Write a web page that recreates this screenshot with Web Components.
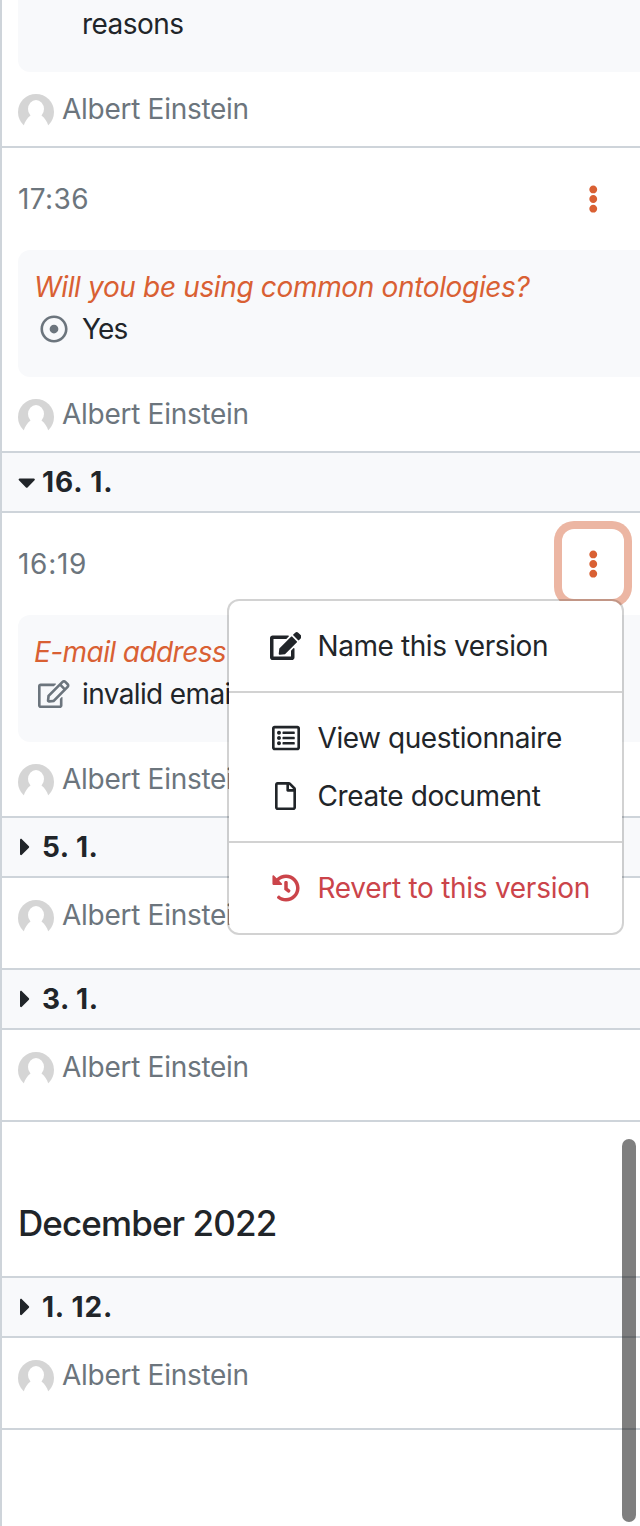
<!DOCTYPE html>
<html lang="en">
<head>
<meta charset="utf-8">
<title>Version history</title>
<style>
  html, body { margin: 0; height: 1526px; overflow: hidden; background: #fff; }
  body {
    --accent: #d96033; --ring: #ecb6a3; --line: #ced4da; --soft: #f8f9fb;
    --muted: #6c757d; --ink: #212529; --danger: #cb444a;
    font: 430 28px/42px Inter, "Liberation Sans", sans-serif; color: var(--ink);
  }
</style>
</head>
<body>
<history-panel>
  <history-event continued>
    <event-answer spacing="-.55">reasons</event-answer>
    <event-author>Albert Einstein</event-author>
  </history-event>
  <history-event time="17:36" spacing=".4">
    <event-answer question="Will you be using common ontologies?" icon="dot-circle" spacing="-.8">Yes</event-answer>
    <event-author>Albert Einstein</event-author>
  </history-event>
  <day-header open spacing=".95">16. 1.</day-header>
  <history-event time="16:19" spacing=".7" active>
    <event-answer question="E-mail address" question-spacing="-.58" icon="edit" spacing="-.62">invalid email</event-answer>
    <event-author>Albert Einstein</event-author>
    <action-menu slot="menu">
      <menu-item icon="edit-solid" spacing="-.42">Name this version</menu-item>
      <menu-divider></menu-divider>
      <menu-item icon="list" spacing="-.44">View questionnaire</menu-item>
      <menu-item icon="file" spacing="-.4">Create document</menu-item>
      <menu-divider></menu-divider>
      <menu-item icon="history" spacing="-.28" danger>Revert to this version</menu-item>
    </action-menu>
  </history-event>
  <day-header spacing=".5">5. 1.</day-header>
  <event-author summary>Albert Einstein</event-author>
  <day-header spacing=".5">3. 1.</day-header>
  <event-author summary>Albert Einstein</event-author>
  <month-title>December 2022</month-title>
  <day-header spacing=".8">1. 12.</day-header>
  <event-author summary last>Albert Einstein</event-author>
</history-panel>
<script>
const ICONS = {
  'edit-solid': [576, 'M402.6 83.2l90.2 90.2c3.8 3.8 3.8 10 0 13.8L274.4 405.6l-92.8 10.3c-12.4 1.4-22.9-9.1-21.5-21.5l10.3-92.8L388.8 83.2c3.8-3.8 10-3.8 13.8 0zm162-22.9l-48.8-48.8c-15.2-15.2-39.9-15.2-55.2 0l-35.4 35.4c-3.8 3.8-3.8 10 0 13.8l90.2 90.2c3.8 3.8 10 3.8 13.8 0l35.4-35.4c15.2-15.3 15.2-40 0-55.2zM384 346.2V448H64V128h229.8c3.2 0 6.2-1.3 8.5-3.5l40-40c7.6-7.6 2.2-20.5-8.5-20.5H48C21.5 64 0 85.5 0 112v352c0 26.5 21.5 48 48 48h352c26.5 0 48-21.5 48-48V306.2c0-10.7-12.9-16-20.5-8.5l-40 40c-2.2 2.3-3.5 5.3-3.5 8.5z'],
  'edit': [576, 'M402.3 344.9l32-32c5-5 13.7-1.5 13.7 5.7V464c0 26.5-21.5 48-48 48H48c-26.5 0-48-21.5-48-48V112c0-26.5 21.5-48 48-48h273.5c7.1 0 10.7 8.6 5.7 13.7l-32 32c-1.5 1.5-3.5 2.3-5.7 2.3H48v352h352V350.5c0-2.1.8-4.1 2.3-5.6zm156.6-201.8L296.3 405.7l-90.4 10c-26.2 2.9-48.5-19.2-45.6-45.6l10-90.4L432.9 17.1c22.9-22.9 59.9-22.9 82.7 0l43.2 43.2c22.9 22.9 22.9 60 .1 82.8zM460.1 174L402 115.9 216.2 301.8l-7.3 65.3 65.3-7.3L460.1 174zm64.8-79.7l-43.2-43.2c-4.1-4.1-10.8-4.1-14.8 0L436 82l58.1 58.1 30.9-30.9c4-4.2 4-10.8-.1-14.9z'],
  'list': [512, 'M464 32H48C21.49 32 0 53.49 0 80v352c0 26.51 21.49 48 48 48h416c26.51 0 48-21.49 48-48V80c0-26.51-21.49-48-48-48zm-6 400H54a6 6 0 0 1-6-6V86a6 6 0 0 1 6-6h404a6 6 0 0 1 6 6v340a6 6 0 0 1-6 6zm-42-92v24c0 6.627-5.373 12-12 12H204c-6.627 0-12-5.373-12-12v-24c0-6.627 5.373-12 12-12h200c6.627 0 12 5.373 12 12zm0-96v24c0 6.627-5.373 12-12 12H204c-6.627 0-12-5.373-12-12v-24c0-6.627 5.373-12 12-12h200c6.627 0 12 5.373 12 12zm0-96v24c0 6.627-5.373 12-12 12H204c-6.627 0-12-5.373-12-12v-24c0-6.627 5.373-12 12-12h200c6.627 0 12 5.373 12 12zm-252 12c0 19.882-16.118 36-36 36s-36-16.118-36-36 16.118-36 36-36 36 16.118 36 36zm0 96c0 19.882-16.118 36-36 36s-36-16.118-36-36 16.118-36 36-36 36 16.118 36 36zm0 96c0 19.882-16.118 36-36 36s-36-16.118-36-36 16.118-36 36-36 36 16.118 36 36z'],
  'file': [384, 'M369.9 97.9L286 14C277 5 264.8-.1 252.1-.1H48C21.5 0 0 21.5 0 48v416c0 26.5 21.5 48 48 48h288c26.5 0 48-21.5 48-48V131.9c0-12.7-5.1-25-14.1-34zM332.1 128H256V51.9l76.1 76.1zM48 464V48h160v104c0 13.3 10.7 24 24 24h104v288H48z'],
  'history': [512, 'M504 255.531c.253 136.64-111.18 248.372-247.82 248.468-59.015.042-113.223-20.53-155.822-54.911-11.077-8.94-11.905-25.541-1.839-35.607l11.267-11.267c8.609-8.609 22.353-9.551 31.891-1.984C173.062 425.135 212.781 440 256 440c101.705 0 184-82.311 184-184 0-101.705-82.311-184-184-184-48.814 0-93.149 18.969-126.068 49.932l50.754 50.754c10.08 10.08 2.941 27.314-11.313 27.314H24c-8.837 0-16-7.163-16-16V38.627c0-14.254 17.234-21.393 27.314-11.314l49.372 49.372C129.209 34.136 189.552 8 256 8c136.81 0 247.747 110.78 248 247.531zm-180.912 78.784l9.823-12.63c8.138-10.463 6.253-25.542-4.21-33.679L288 256.349V152c0-13.255-10.745-24-24-24h-16c-13.255 0-24 10.745-24 24v135.651l65.409 50.874c10.463 8.137 25.541 6.253 33.679-4.21z'],
  'dot-circle': [512, 'M256 56c110.532 0 200 89.451 200 200 0 110.532-89.451 200-200 200-110.532 0-200-89.451-200-200 0-110.532 89.451-200 200-200m0-48C119.033 8 8 119.033 8 256s111.033 248 248 248 248-111.033 248-248S392.967 8 256 8zm0 168c-44.183 0-80 35.817-80 80s35.817 80 80 80 80-35.817 80-80-35.817-80-80-80z'],
  'caret-down': [320, 'M31.3 192h257.3c17.8 0 26.7 21.5 14.1 34.1L174.1 354.7c-7.8 7.8-20.5 7.8-28.3 0L17.2 226.1C4.6 213.5 13.5 192 31.3 192z'],
  'caret-right': [192, 'M0 384.662V127.338c0-17.818 21.543-26.741 34.142-14.142l128.662 128.662c7.81 7.81 7.81 20.474 0 28.284L34.142 398.804C21.543 411.404 0 402.48 0 384.662z'],
  'ellipsis': [192, 'M96 184c39.8 0 72 32.2 72 72s-32.2 72-72 72-72-32.2-72-72 32.2-72 72-72zM24 80c0 39.8 32.2 72 72 72s72-32.2 72-72S135.8 8 96 8 24 40.2 24 80zm0 352c0 39.8 32.2 72 72 72s72-32.2 72-72-32.2-72-72-72-72 32.2-72 72z']
};

// Fine tracking of one label, in pixels.
const tracking = (el, attr = 'spacing', base = 0) => `style="letter-spacing:${el.getAttribute(attr) || base}px"`;

function define(name, css, render) {
  customElements.define(name, class extends HTMLElement {
    constructor() {
      super();
      this.attachShadow({ mode: 'open' });
    }
    connectedCallback() {
      this.shadowRoot.innerHTML = `<style>:host{box-sizing:border-box}${css}</style>${render(this)}`;
    }
  });
}

define('fa-icon', `:host{display:inline-flex;flex:none;justify-content:center;align-items:center}
  svg{display:block;height:28px;fill:currentColor}`, el => {
  const [w, d] = ICONS[el.getAttribute('name')];
  return `<svg viewBox="0 0 ${w} 512" width="${w * 28 / 512}" aria-hidden="true"><path d="${d}"/></svg>`;
});

define('history-panel', `:host{display:block;position:relative;height:1526px;overflow:hidden;border-left:2px solid var(--line);background:#fff}
  .thumb{position:absolute;z-index:5;right:4px;top:1139px;width:14px;height:383px;border-radius:7px;background:rgba(0,0,0,.5)}`,
  () => `<slot></slot><div class="thumb"></div>`);

define('history-event', `:host{display:block;position:relative;padding:16px 0 16px 16px}
  :host([continued]){padding-top:0;border-bottom:2px solid var(--line)}
  header{display:flex;align-items:center;justify-content:space-between;height:70px;margin-bottom:16px;padding-right:16px;color:var(--muted)}
  button{display:flex;align-items:center;justify-content:center;width:62px;height:70px;padding:0 0 1px;border:0;border-radius:12px;background:transparent;color:var(--accent)}
  :host([active]) button{box-shadow:0 0 0 8px var(--ring)}`,
  el => (el.hasAttribute('time') ? `<header><time ${tracking(el)}>${el.getAttribute('time')}</time><button aria-label="Actions"><fa-icon name="ellipsis"></fa-icon></button></header>` : '')
    + `<slot></slot><slot name="menu"></slot>`);

define('event-answer', `:host{display:block;margin-bottom:16px;padding:3px 16px 27px;background:var(--soft);border-radius:0 0 0 12px}
  :host([question]){padding-top:16px;border-radius:12px 0 0 12px}
  .q{font-style:italic;color:var(--accent);white-space:nowrap}
  .a{display:flex;gap:8px;white-space:nowrap}
  .i{display:flex;justify-content:center;width:40px;flex:none;color:var(--muted)}`,
  el => {
    const q = el.getAttribute('question'), i = el.getAttribute('icon');
    return `${q ? `<div class="q" ${tracking(el, 'question-spacing', -.35)}>${q}</div>` : ''}<div class="a"><span class="i">${i ? `<fa-icon name="${i}"></fa-icon>` : ''}</span><span ${tracking(el)}><slot></slot></span></div>`;
  });

define('event-author', `:host{display:flex;gap:8px;height:42px;color:var(--muted);letter-spacing:-.28px}
  :host([summary]){box-sizing:content-box;padding:16px 16px 32px}
  :host([last]){border-bottom:2px solid var(--line)}
  svg{flex:none;width:36px;height:36px;margin-top:6px}`,
  () => `<svg viewBox="0 0 36 36" aria-hidden="true"><circle cx="18" cy="18" r="18" fill="#d5d5d5"/><ellipse cx="18" cy="15" rx="8" ry="9" fill="#fff"/><path d="M5.500 32C7 27.500 9.300 23.800 12.500 21.500H23.500C26.700 23.800 29 27.500 30.500 32L32 37H4z" fill="#fff"/></svg><span><slot></slot></span>`);

define('day-header', `:host{display:flex;align-items:center;height:62px;padding-left:16px;border:solid var(--line);border-width:2px 0;background:var(--soft);font-weight:700}
  .c{display:flex;width:24px}
  :host(:not([open])) .c{padding-left:2px;width:22px}`,
  el => `<span class="c"><fa-icon name="${el.hasAttribute('open') ? 'caret-down' : 'caret-right'}"></fa-icon></span><span ${tracking(el)}><slot></slot></span>`);

define('month-title', `:host{display:block;height:156px;padding:80px 16px 0;border-top:2px solid var(--line);font-size:35px;font-weight:530;letter-spacing:-.9px}`,
  () => `<slot></slot>`);

define('action-menu', `:host{display:block;position:absolute;z-index:2;top:86px;right:16px;width:397px;padding:16px 0;border:2px solid rgba(0,0,0,.175);border-radius:12px;background:#fff;background-clip:padding-box}`,
  () => `<slot></slot>`);

define('menu-item', `:host{display:flex;align-items:center;gap:14.5px;height:58px;padding-left:39px;white-space:nowrap}
  :host([danger]){color:var(--danger)}
  fa-icon{width:35px;padding-bottom:1px}`,
  el => `<fa-icon name="${el.getAttribute('icon')}"></fa-icon><span ${tracking(el)}><slot></slot></span>`);

define('menu-divider', `:host{display:block;height:2px;margin:16px 0;background:rgba(0,0,0,.175)}`, () => '');
</script>
</body>
</html>
